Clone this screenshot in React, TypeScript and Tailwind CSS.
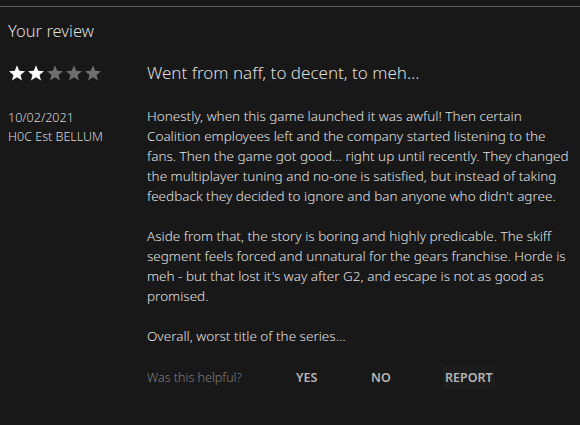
import React from "react";

const FONT = { fontFamily: '"Noto Sans", "Open Sans", sans-serif' };

const PARAS = [
  [
    "Honestly, when this game launched it was awful! Then certain",
    "Coalition employees left and the company started listening to the",
    "fans. Then the game got good… right up until recently. They changed",
    "the multiplayer tuning and no-one is satisfied, but instead of taking",
    "feedback they decided to ignore and ban anyone who didn't agree.",
  ],
  [
    "Aside from that, the story is boring and highly predicable. The skiff",
    "segment feels forced and unnatural for the gears franchise. Horde is",
    "meh - but that lost it's way after G2, and escape is not as good as",
    "promised.",
  ],
  ["Overall, worst title of the series…"],
];

function Star({ filled }: { filled: boolean }) {
  return (
    <svg viewBox="0 0 24 24" className="h-[18px] w-[18px]">
      <path
        d="M12 1.8l2.9 7.3 7.8.4-6 5 2 7.6L12 17.8l-6.7 4.3 2-7.6-6-5 7.8-.4z"
        fill={filled ? "#ffffff" : "#6f6f6f"}
      />
    </svg>
  );
}

export default function App() {
  return (
    <div className="h-[425px] w-[580px] bg-[#181818] pt-[6px] font-light text-[#e2e2e2]" style={FONT}>
      <div className="h-px bg-[#5c5c5c]" />
      <h2 className="pl-[8px] pt-[12px] text-[16.5px] leading-[24px] text-[#dcdcdc]">Your review</h2>

      <div className="mt-[17px] flex">
        <div className="flex w-[147px] items-center gap-[1px] pl-[8px]">
          {[true, true, false, false, false].map((f, i) => (
            <Star key={i} filled={f} />
          ))}
        </div>
        <div className="text-[17px] leading-[26px] text-[#dedede]">Went from naff, to decent, to meh…</div>
      </div>

      <div className="mt-[20px] flex">
        <div className="w-[147px] pl-[8px] pt-[2px] text-[12.5px] leading-[19px] text-[#d8d8d8]">
          <div>10/02/2021</div>
          <div>H0C Est BELLUM</div>
        </div>
        <div className="w-[430px] whitespace-nowrap text-[13.5px] leading-[20px]">
          {PARAS.map((lines, i) => (
            <p key={i} className={i > 0 ? "mt-[20px]" : ""}>
              {lines.map((l, j) => (
                <span key={j} className="block">
                  {l}
                </span>
              ))}
            </p>
          ))}

          <div className="mt-[20px] flex items-center text-[12.5px]">
            <span className="w-[149px] text-[#7e7e7e]">Was this helpful?</span>
            <button className="w-[75px] text-left font-semibold text-[#b4b4b4]">YES</button>
            <button className="w-[72px] text-left font-semibold text-[#b4b4b4]">NO</button>
            <button className="bg-[#1c1c1c] px-[2px] py-[2px] font-semibold text-[#b4b4b4]">REPORT</button>
          </div>
        </div>
      </div>
    </div>
  );
}
